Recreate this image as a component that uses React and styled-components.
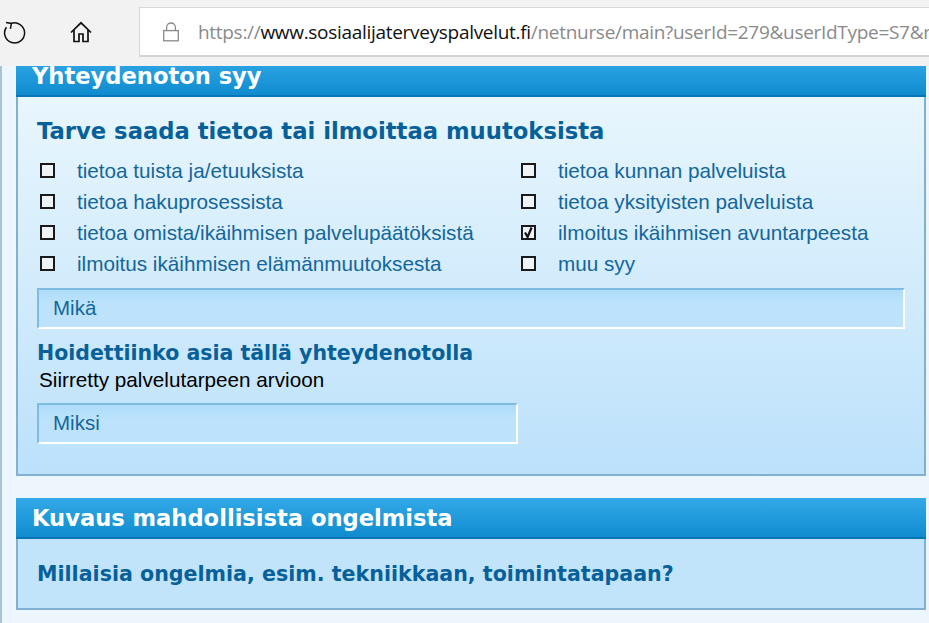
import styled, { createGlobalStyle } from "styled-components";

const GlobalStyle = createGlobalStyle`
    html, body {
        margin: 0;
        padding: 0;
        height: 100%;
        overflow: hidden;
        background: #edf6fc;
    }
`

const Window = styled.div`
    width: 929px;
    height: 623px;
    display: flex;
    flex-direction: column;
    overflow: hidden;
`

const Toolbar = styled.div`
    height: 66px;
    flex-shrink: 0;
    box-sizing: border-box;
    background: #f2f2f2;
    display: flex;
    align-items: flex-start;
    position: relative;
    z-index: 2;
`

const IconSlot = styled.div`
    width: ${(props) => props.$width}px;
    height: 64px;
    display: flex;
    align-items: center;
    justify-content: center;
    flex-shrink: 0;
`

const AddressBar = styled.div`
    height: 50px;
    margin-top: 7px;
    flex: 1;
    min-width: 0;
    box-sizing: border-box;
    background: #ffffff;
    border: 1px solid #d9d9d9;
    border-right: none;
    border-bottom: 2px solid #d4d4d4;
    display: flex;
    align-items: center;
    padding-left: 22px;
    overflow: hidden;
    white-space: nowrap;
    font-family: "Open Sans", "Noto Sans", sans-serif;
    font-size: 19px;
    letter-spacing: -0.3px;
    color: #8a8a8a;
`

const LockSlot = styled.span`
    display: flex;
    flex-shrink: 0;
`

const Url = styled.span`
    margin-left: 18px;
`

const Domain = styled.span`
    color: #111111;
`

const PageArea = styled.div`
    flex: 1;
    overflow: hidden;
    border-left: 2px solid #a9c4da;
`

const Content = styled.div`
    margin-top: -10px;
    padding: 0 3px 0 14px;
    display: flex;
    flex-direction: column;
    gap: 22px;
`

const Panel = styled.section`
    font-family: "Liberation Sans", Arial, sans-serif;
`

const PanelHeader = styled.h2`
    margin: 0;
    height: 41px;
    box-sizing: border-box;
    padding-left: 16px;
    display: flex;
    align-items: center;
    background: linear-gradient(#33a9e8, #0f8ccf);
    border-bottom: 2px solid #0875b4;
    color: #ffffff;
    font-family: "DejaVu Sans", Verdana, sans-serif;
    font-size: 22.6px;
    font-weight: 700;
`

const PanelBody = styled.div`
    box-sizing: border-box;
    height: ${(props) => props.$height}px;
    padding: ${(props) => props.$top}px 20px 0 19px;
    background: ${(props) => props.$background};
    border: 2px solid #82b0d2;
    border-top: none;
`

const Heading = styled.h3`
    margin: ${(props) => props.$top || 0}px 0 0;
    color: #07609a;
    font-family: "DejaVu Sans", Verdana, sans-serif;
    font-size: ${(props) => props.$size}px;
    font-weight: 700;
    line-height: 26px;
`

const CheckGrid = styled.div`
    margin-top: 11px;
    display: grid;
    grid-template-columns: 481px 1fr;
    grid-auto-rows: 31px;
`

const CheckRow = styled.label`
    display: flex;
    align-items: center;
    padding-left: 3px;
    color: #14669a;
    font-size: 20.7px;
`

const Box = styled.span`
    width: 11px;
    height: 11px;
    margin-right: 22px;
    flex-shrink: 0;
    border: 2px solid #1a1a1a;
    background: #eef3f6;
    display: flex;
    align-items: center;
    justify-content: center;
`

const Field = styled.div`
    box-sizing: border-box;
    height: 41px;
    width: ${(props) => props.$width}px;
    margin-top: ${(props) => props.$top}px;
    padding: 0 0 2px 14px;
    display: flex;
    align-items: center;
    color: #14669a;
    font-size: 20.5px;
    background: linear-gradient(#aedcfa, #bde3fc 40%);
    border: 2px solid #ffffff;
    border-top-color: #7fbbe3;
    border-left-color: #7fbbe3;
`

const PlainText = styled.div`
    padding-left: 2px;
    color: #000000;
    font-size: 20.7px;
    line-height: 28px;
`

const ReloadIcon = () => (
    <svg width="24" height="24" viewBox="0 0 24 24" fill="none" stroke="#111" strokeWidth="1.5">
        <path d="M8 3.6A10 10 0 1 1 3.4 7.2" />
        <path d="M3 2.6 8.4 3.4 7.4 8.8" />
    </svg>
)

const HomeIcon = () => (
    <svg width="24" height="24" viewBox="0 0 24 24" fill="none" stroke="#111" strokeWidth="1.7">
        <path d="M2 12.5 12 2.8l10 9.7" />
        <path d="M5 10v11.5h5V14h4v7.5h5V10" />
    </svg>
)

const LockIcon = () => (
    <svg width="18" height="20" viewBox="0 0 18 20" fill="none" stroke="#8a8a8a" strokeWidth="1.3">
        <rect x="1.7" y="8.6" width="14.6" height="10.2" />
        <path d="M4.6 8.6V5.4a4.4 4.4 0 0 1 8.8 0v3.2" />
    </svg>
)

const CheckMark = () => (
    <svg width="11" height="11" viewBox="0 0 11 11" fill="none" stroke="#111" strokeWidth="2.2">
        <path d="M2 5.5 4.6 10 8.6 0.5" />
    </svg>
)

const REASONS = [
    { label: "tietoa tuista ja/etuuksista" },
    { label: "tietoa kunnan palveluista" },
    { label: "tietoa hakuprosessista" },
    { label: "tietoa yksityisten palveluista" },
    { label: "tietoa omista/ikäihmisen palvelupäätöksistä" },
    { label: "ilmoitus ikäihmisen avuntarpeesta", checked: true },
    { label: "ilmoitus ikäihmisen elämänmuutoksesta" },
    { label: "muu syy" },
]

const App = () => {
  return (
    <Window>
        <GlobalStyle />
        <Toolbar>
            <IconSlot $width={30}><ReloadIcon /></IconSlot>
            <IconSlot $width={102}><HomeIcon /></IconSlot>
            <IconSlot $width={7} />
            <AddressBar>
                <LockSlot><LockIcon /></LockSlot>
                <Url>https://<Domain>www.sosiaalijaterveyspalvelut.fi</Domain>/netnurse/main?userId=279&amp;userIdType=S7&amp;r</Url>
            </AddressBar>
        </Toolbar>
        <PageArea>
            <Content>
                <Panel>
                    <PanelHeader>Yhteydenoton syy</PanelHeader>
                    <PanelBody $height={379} $top={21} $background="linear-gradient(#e8f6fd, #bce1fb)">
                        <Heading $size={22.7}>Tarve saada tietoa tai ilmoittaa muutoksista</Heading>
                        <CheckGrid>
                            {
                                REASONS.map((reason) => {
                                    return (
                                        <CheckRow key={reason.label}>
                                            <Box>{reason.checked && <CheckMark />}</Box>
                                            {reason.label}
                                        </CheckRow>
                                    )
                                })
                            }
                        </CheckGrid>
                        <Field $width={868} $top={9}>Mikä</Field>
                        <Heading $size={20.5} $top={11}>Hoidettiinko asia tällä yhteydenotolla</Heading>
                        <PlainText>Siirretty palvelutarpeen arvioon</PlainText>
                        <Field $width={481} $top={9}>Miksi</Field>
                    </PanelBody>
                </Panel>
                <Panel>
                    <PanelHeader>Kuvaus mahdollisista ongelmista</PanelHeader>
                    <PanelBody $height={71} $top={22} $background="#c1e4fb">
                        <Heading $size={20.6}>Millaisia ongelmia, esim. tekniikkaan, toimintatapaan?</Heading>
                    </PanelBody>
                </Panel>
            </Content>
        </PageArea>
    </Window>
  )
}

export default App
